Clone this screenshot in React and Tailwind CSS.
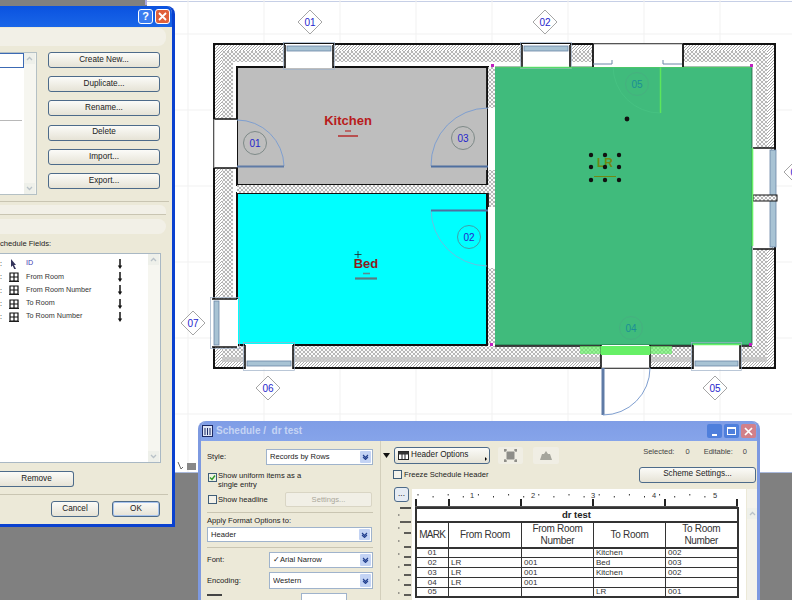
import React from 'react';

const font = "font-['Liberation_Sans',Arial,sans-serif]";

const BTN = 'flex items-center justify-center rounded-[3px] border border-[#4d6b8a] bg-gradient-to-b from-[#fbfbf8] to-[#e6e3d6] text-[8.2px] leading-none text-[#222]';
const hatchLines = [188, 264, 340, 416, 492, 568, 644, 720];
const gridRows = [34, 110, 186, 262, 338, 414];

const Button = ({ className, children }) => <div className={`${BTN} ${className}`}>{children}</div>;

const Select = ({ className, children }) => (
    <div className={`flex items-center border border-[#9fb3cc] bg-white pl-[3px] pr-px text-[7.6px] text-[#222] ${className}`}>
        <span className="flex-1 truncate">{children}</span>
        <span className="flex h-[calc(100%-2px)] w-[11px] items-center justify-center rounded-[1px] bg-[#c3d3f4]">
            <svg width="7" height="6" viewBox="0 0 7 6"><path d="M1 1l2.5 2.5L6 1M1 3l2.5 2.5L6 3" fill="none" stroke="#23408f" strokeWidth="1.1" /></svg>
        </span>
    </div>
);

const Check = ({ on }) => (
    <span className={`flex h-[9px] w-[9px] shrink-0 items-center justify-center border border-[#3f5d78] ${on ? 'bg-[#eef3e4]' : 'bg-[#f4f2ea]'}`}>
        {on && <svg width="7" height="7" viewBox="0 0 7 7"><path d="M1 3.5l2 2L6 1.5" fill="none" stroke="#2f9a26" strokeWidth="1.4" /></svg>}
    </span>
);

const GridIcon = () => (
    <svg width="10" height="10" viewBox="0 0 10 10"><path d="M1 1h8v8H1zM5 1v8M1 5h8" fill="none" stroke="#111" strokeWidth="1.2" /><path d="M0 9.6h10" stroke="#111" /></svg>
);
const CursorIcon = () => (
    <svg width="10" height="10" viewBox="0 0 10 10"><path d="M2 0l5 6H5l2 4-1.6.4L3.6 6.6 2 8z" fill="#33335a" /></svg>
);
const DownArrow = () => (
    <svg width="6" height="10" viewBox="0 0 6 10"><path d="M3 0v8" stroke="#111" strokeWidth="1.5" /><path d="M.8 6.5h4.4L3 10z" fill="#111" /></svg>
);
const ScrollArrow = ({ down }) => (
    <svg width="11" height="11" viewBox="0 0 11 11"><rect width="11" height="11" fill="#eef0ea" /><path d={down ? 'M3 4l2.5 2.5L8 4' : 'M3 7l2.5-2.5L8 7'} fill="none" stroke="#b9c2c8" strokeWidth="1.3" /></svg>
);

const Field = ({ icon, label, blue }) => (
    <div className="flex h-[13.3px] items-center">
        <span className="w-[2px] text-[7px] leading-none text-black">:</span>
        <span className="ml-[7px] flex w-[17px] items-center">{icon}</span>
        <span className={`w-[91px] text-[7.2px] ${blue ? 'text-[#3a3ab0]' : 'text-[#333]'}`}>{label}</span>
        <DownArrow />
    </div>
);

const Diamond = ({ x, y, label }) => (
    <g>
        <path d={`M${x} ${y - 12}L${x + 12} ${y}L${x} ${y + 12}L${x - 12} ${y}Z`} fill="#fff" stroke="#a5a5a5" />
        <text x={x} y={y + 3.5} textAnchor="middle" fontSize="10" fill="#2525cc">{label}</text>
    </g>
);

const Tag = ({ x, y, label, stroke = '#7e8a88', color = '#2525cc' }) => (
    <g>
        <circle cx={x} cy={y} r="11.5" fill="none" stroke={stroke} />
        <text x={x} y={y + 3.5} textAnchor="middle" fontSize="10" fill={color}>{label}</text>
    </g>
);

// window in a wall: gap, black jambs and the glass on the outer side
const PlanWindow = ({ x, y, w, h, side }) => {
    const across = side === 'top' || side === 'bottom';
    const glass = {
        top: [x + 2, y + 2, w - 4, 5],
        bottom: [x + 2, y + h - 8, w - 4, 5],
        left: [x + 2, y + 2, 5, h - 4],
    }[side];
    return (
        <g>
            <rect x={x} y={y} width={w} height={h} fill="#fff" />
            <rect x={glass[0]} y={glass[1]} width={glass[2]} height={glass[3]} fill="#a8c3d4" stroke="#6a86a6" strokeWidth="0.8" />
            {across ? (
                <path d={`M${x} ${y + 1}v${h - 1}M${x + w} ${y + 1}v${h - 1}`} stroke="#111" strokeWidth="1.6" />
            ) : (
                <path d={`M${x} ${y}h${w - 1}M${x} ${y + h}h${w - 1}`} stroke="#111" strokeWidth="1.6" />
            )}
            <rect x={x - 1.5} y={y - 1.5} width={w + 3} height={h + 3} fill="none" stroke="#9db0c6" strokeWidth="0.7" />
        </g>
    );
};

const FloorPlan = () => (
    <svg className="absolute left-0 top-0" width="792" height="473" viewBox="0 0 792 473" fontFamily="'Liberation Sans', Arial, sans-serif">
        <defs>
            <pattern id="diag" width="3" height="3" patternUnits="userSpaceOnUse">
                <rect width="3" height="3" fill="#fff" />
                <path d="M-1 1L1 -1M0 3L3 0M2 4L4 2" stroke="#a0a0a0" strokeWidth="0.9" />
            </pattern>
            <pattern id="cross" width="4" height="4" patternUnits="userSpaceOnUse">
                <rect width="4" height="4" fill="#fafafa" />
                <path d="M0 0L4 4M4 0L0 4" stroke="#a6a6a6" strokeWidth="0.8" />
            </pattern>
        </defs>

        {hatchLines.map((x) => <path key={x} d={`M${x} 0V473`} stroke="#f1f1f1" />)}
        {gridRows.map((y) => <path key={y} d={`M145 ${y}H792`} stroke="#f1f1f1" />)}

        {/* walls */}
        <rect x="214" y="44" width="561" height="324" fill="url(#diag)" stroke="#111" strokeWidth="2" />
        <rect x="222" y="51" width="545" height="309" fill="url(#cross)" />
        <rect x="222" y="357" width="545" height="5" fill="#c4c4c4" opacity="0.8" />
        <rect x="233" y="62" width="523" height="284" fill="#fff" />

        {/* rooms */}
        <rect x="237" y="67" width="251" height="118" fill="#bebebe" stroke="#111" strokeWidth="2" />
        <rect x="237" y="193" width="250" height="152" fill="#00ffff" stroke="#111" strokeWidth="2" />
        <rect x="488" y="67" width="7" height="278" fill="url(#cross)" />
        <rect x="237" y="185" width="251" height="8" fill="url(#cross)" />
        <rect x="495" y="67" width="257" height="278" fill="#40bb7c" />
        <path d="M495 67H752V345H495" fill="none" stroke="#1c5e3a" strokeWidth="0.8" />
        <path d="M487 67V108M487 170V185M488 193V207M487 268V345" stroke="#111" strokeWidth="1.8" />
        <path d="M237 345H488M495 346H601M650 346H693M740 346H752" stroke="#111" strokeWidth="1.6" />

        {/* corner dots */}
        <rect x="491" y="64" width="3" height="3" fill="#c020c0" />
        <rect x="750" y="64" width="3" height="3" fill="#c020c0" />
        <rect x="490" y="343" width="3" height="3" fill="#c020c0" />
        <rect x="749" y="343" width="3" height="3" fill="#c020c0" />

        {/* door gaps */}
        <rect x="214" y="119" width="23" height="49" fill="#fff" />
        <path d="M214 119h23M214 168h23" stroke="#111" strokeWidth="1.6" />
        <path d="M214 119v49" stroke="#9a9a9a" />
        <rect x="488" y="108" width="7" height="62" fill="#fff" />
        <rect x="488" y="207" width="7" height="61" fill="#fff" />
        <rect x="593" y="44" width="90" height="23" fill="#fff" />
        <path d="M593 44h90" stroke="#9a9a9a" />
        <path d="M593 44v23M683 44v23" stroke="#111" strokeWidth="1.8" />
        <path d="M593 64h19v-4M663 60v4h19" fill="none" stroke="#6a86a6" />
        <rect x="601" y="345" width="49" height="23" fill="#fff" />
        <path d="M601 345v23M650 345v23" stroke="#111" strokeWidth="1.6" />
        <path d="M601 368h49" stroke="#8a8a8a" />

        {/* windows */}
        <PlanWindow x={285} y={44} w={48} h={24} side="top" />
        <PlanWindow x={522} y={44} w={48} h={23} side="top" />
        <PlanWindow x={212} y={299} w={26} h={48} side="left" />
        <PlanWindow x={245} y={344} w={48} h={25} side="bottom" />
        <PlanWindow x={693} y={344} w={47} h={25} side="bottom" />
        <rect x="753" y="148" width="18" height="101" fill="#fff" />
        <rect x="770" y="150" width="6" height="47" fill="#a8c3d4" stroke="#6a86a6" strokeWidth="0.8" />
        <rect x="770" y="200" width="6" height="47" fill="#a8c3d4" stroke="#6a86a6" strokeWidth="0.8" />
        <rect x="753" y="195" width="24" height="6" fill="url(#cross)" stroke="#111" />
        <path d="M753 148h23M753 249h23" stroke="#111" strokeWidth="1.6" />

        {/* green highlights */}
        <rect x="580" y="346" width="92" height="8" fill="#66f066" opacity="0.7" />
        <rect x="601" y="346" width="49" height="9" fill="#66f066" />
        <path d="M520 67.5h52M693 344.5h48M752.5 148v98" stroke="#66f066" strokeWidth="1.6" />
        <path d="M660.5 67v46" stroke="#5ce65c" strokeWidth="1.5" />
        <path d="M495 67.5H752" stroke="#52d46a" strokeWidth="0.8" />

        {/* doors */}
        <path d="M237 120A47 47 0 0 1 284 166" fill="none" stroke="#7f9fd0" />
        <path d="M237 166.5h47" stroke="#5f7ba6" strokeWidth="2" />
        <path d="M431 166A57 57 0 0 1 488 108" fill="none" stroke="#7f9fd0" />
        <path d="M431 166.5h57" stroke="#4f6f9f" strokeWidth="2" />
        <path d="M431 210A57 57 0 0 0 487 266" fill="none" stroke="#69c0e0" />
        <path d="M431 210.5h57" stroke="#4f6f9f" strokeWidth="2" />
        <path d="M603 368v47" stroke="#5f7ba6" strokeWidth="3" />
        <path d="M603 415A47 47 0 0 0 650 368" fill="none" stroke="#7f9fd0" />
        <path d="M660 113A47 47 0 0 1 613 67" fill="none" stroke="#46c282" />

        <Tag x={255} y={143} label="01" />
        <Tag x={463} y={138} label="03" />
        <Tag x={469} y={237} label="02" stroke="#3f9fa8" />
        <Tag x={637} y={84} label="05" stroke="#46b080" color="#1b8f96" />
        <Tag x={631} y={328} label="04" stroke="#46b080" color="#1b8f96" />

        <Diamond x={310} y={22} label="01" />
        <Diamond x={545} y={22} label="02" />
        <Diamond x={193} y={323} label="07" />
        <Diamond x={268} y={388} label="06" />
        <Diamond x={715} y={388} label="05" />
        <Diamond x={796} y={172} label="03" />

        {/* room labels */}
        <text x="348" y="125" textAnchor="middle" fontSize="13" fontWeight="700" fill="#b81b1b">Kitchen</text>
        <path d="M345 131h6" stroke="#b85050" strokeWidth="1.6" />
        <path d="M338 136h20" stroke="#b85050" strokeWidth="2" />
        <text x="366" y="268" textAnchor="middle" fontSize="13" fontWeight="700" fill="#8a1c1c">Bed</text>
        <path d="M358 251v7M354.5 254.5h7" stroke="#222" strokeWidth="0.8" />
        <path d="M363 273.5h7" stroke="#5a8a90" strokeWidth="1.6" />
        <path d="M355 278.5h22" stroke="#5a7a80" strokeWidth="2.2" />
        <text x="605" y="167" textAnchor="middle" fontSize="12" fontWeight="700" fill="#6f8a14">LR</text>
        <path d="M594 176.5h22" stroke="#6f8a14" strokeWidth="1" />
        {[591, 605, 619].map((x) => [155, 167, 180].map((y) => <circle key={`${x}-${y}`} cx={x} cy={y} r="2.2" fill="#111" />))}
        <circle cx="627" cy="119" r="2.4" fill="#111" />

        {/* corner tool icons of the canvas */}
        <path d="M178 462l3 7 2-2" fill="none" stroke="#666" />
        <rect x="187" y="463" width="9" height="7" fill="#888" />
        <path d="M175 472.5H198M760 472.5H792" stroke="#a9b9dc" />
    </svg>
);

const PlanDialog = () => (
    <div className={`absolute left-0 top-[6px] flex h-[521px] w-[175px] flex-col overflow-hidden rounded-tr-lg border-r-[3px] border-b-[3px] border-[#0a41cf] bg-[#ece9d8] ${font}`}>
        <div className="flex h-[21px] shrink-0 items-center justify-end gap-[2px] bg-gradient-to-b from-[#0a52e0] to-[#1a66e8] pr-[2px]">
            <span className="flex h-[15px] w-[15px] items-center justify-center rounded-[3px] border border-white bg-[#3a7cf0] text-[11px] font-bold leading-none text-white">?</span>
            <span className="flex h-[15px] w-[15px] items-center justify-center rounded-[3px] border border-white bg-[#e0603a]">
                <svg width="9" height="9" viewBox="0 0 9 9"><path d="M1 1l7 7M8 1L1 8" stroke="#fff" strokeWidth="1.8" /></svg>
            </span>
        </div>
        <div className="mt-px h-[18px] w-[166px] shrink-0 rounded-r-lg bg-[#f2f0e7]" />
        <div className="mt-[6px] flex shrink-0">
            <div className="flex h-[143px] w-[37px] border border-l-0 border-[#b4c0c4] bg-white">
                <div className="flex-1">
                    <div className="h-[15px] border border-l-0 border-[#3c6ab4]" />
                    <div className="mt-[52px] mr-[2px] border-t border-[#b8b8b8]" />
                </div>
                <div className="flex w-[12px] flex-col justify-between bg-[#f6f6f0]">
                    <ScrollArrow />
                    <ScrollArrow down />
                </div>
            </div>
            <div className="ml-[11px] flex w-[112px] flex-col gap-[8.2px]">
                {['Create New...', 'Duplicate...', 'Rename...', 'Delete', 'Import...', 'Export...'].map((t) => (
                    <Button key={t} className="h-4">{t}</Button>
                ))}
            </div>
        </div>
        <div className="mt-[6px] h-px w-[169px] shrink-0 bg-[#c9c5b2]" />
        <div className="mt-[3px] h-[10px] w-[166px] shrink-0 rounded-tr-md border-b border-[#c9c5b2] bg-[#f2f0e7]" />
        <div className="mt-[4px] h-[15px] w-[166px] shrink-0 rounded-r-lg bg-[#f2f0e7]" />
        <div className="mt-[5px] h-[10px] shrink-0 text-[7.6px] leading-[10px] text-[#222]">chedule Fields:</div>
        <div className="mt-[4px] flex h-[210px] w-[161px] shrink-0 border border-l-0 border-[#a9b8c4] bg-white">
            <div className="flex-1 pt-[3px]">
                <Field icon={<CursorIcon />} label="ID" blue />
                <Field icon={<GridIcon />} label="From Room" />
                <Field icon={<GridIcon />} label="From Room Number" />
                <Field icon={<GridIcon />} label="To Room" />
                <Field icon={<GridIcon />} label="To Room Number" />
            </div>
            <div className="flex w-[12px] flex-col justify-between bg-[#f6f6f0]">
                <ScrollArrow />
                <ScrollArrow down />
            </div>
        </div>
        <Button className="mt-2 h-4 w-[74px] shrink-0 rounded-l-none border-l-0">Remove</Button>
        <div className="mt-[7px] h-px w-[168px] shrink-0 bg-[#c9c5b2]" />
        <div className="mt-[6px] flex shrink-0 pl-[51px]">
            <Button className="h-4 w-12">Cancel</Button>
            <Button className="ml-[13px] h-4 w-12 border-[#3a5f9a] shadow-[inset_0_0_0_1px_#a8c4ee]">OK</Button>
        </div>
    </div>
);

const Ruler = () => (
    <svg className="block" width="334" height="18" viewBox="0 0 334 18" fontFamily="'Liberation Sans', Arial, sans-serif">
        {[0, 1, 2, 3, 4, 5, 6, 7, 8, 9, 10, 11, 12, 13, 14, 15, 16, 17, 18, 19].map((i) => (
            <path key={i} d={`M${6 + i * 15.1} ${i % 2 ? 7 : 5}v1.5`} stroke="#333" />
        ))}
        {[[60, '1'], [121, '2'], [181, '3'], [242, '4'], [303, '5']].map(([x, t]) => (
            <text key={t} x={x} y="9" textAnchor="middle" fontSize="7.5" fill="#333">{t}</text>
        ))}
        {[4, 37, 109, 181, 253, 325].map((x) => <path key={x} d={`M${x} 10v7`} stroke="#222" strokeWidth="2" />)}
        <path d="M3 17.5H326" stroke="#555" />
    </svg>
);

const SideRuler = () => (
    <svg className="absolute left-0 top-[16px]" width="18" height="100" viewBox="0 0 18 100">
        {[3, 17, 28, 42, 52, 60, 70, 80, 90].map((y) => <path key={y} d={`M${y % 14 === 3 ? 6 : 10} ${y}H17`} stroke="#222" strokeWidth="1.4" />)}
        {[10, 23, 36, 49, 62, 75, 88].map((y) => <path key={y} d={`M4 ${y}h1.5`} stroke="#444" />)}
    </svg>
);

const rows = [
    { cells: ['01', '', '', 'Kitchen', '002'], h: 'h-[9px]' },
    { cells: ['02', 'LR', '001', 'Bed', '003'], h: 'h-[10px]' },
    { cells: ['03', 'LR', '001', 'Kitchen', '002'], h: 'h-[10px]' },
    { cells: ['04', 'LR', '001', '', ''], h: 'h-[10px]' },
    { cells: ['05', '', '', 'LR', '001'], h: 'h-[9px]' },
];

const ScheduleTable = () => (
    <table className="ml-[2.5px] w-[322px] table-fixed border-collapse border-2 border-[#333] bg-white text-[#333]">
        <colgroup>
            <col className="w-[33px]" />
            <col className="w-[73px]" />
            <col className="w-[72px]" />
            <col className="w-[72px]" />
            <col className="w-[72px]" />
        </colgroup>
        <tbody>
            <tr className="h-[14px] border-b-2 border-[#333]">
                <td colSpan={5} className="p-0 text-center text-[9.5px] font-bold leading-none text-[#222]">dr test</td>
            </tr>
            <tr className="h-[24px] border-b-2 border-[#333] text-center text-[10px] leading-[12px] tracking-[-0.3px]">
                <td className="p-0 tracking-[-0.7px]">MARK</td>
                {['From Room', 'From Room Number', 'To Room', 'To Room Number'].map((t) => (
                    <td key={t} className="border-l border-[#333] p-0 px-2">{t}</td>
                ))}
            </tr>
            {rows.map((r) => (
                <tr key={r.cells[0]} className={`${r.h} border-b border-[#333] text-[8px] leading-[8px]`}>
                    <td className="p-0 text-center">{r.cells[0]}</td>
                    {r.cells.slice(1).map((c, i) => (
                        <td key={i} className="border-l border-[#333] p-0 pl-[2px]">{c}</td>
                    ))}
                </tr>
            ))}
        </tbody>
    </table>
);

const ScheduleWindow = () => (
    <div className={`absolute left-[198px] top-[421px] flex h-[190px] w-[562px] flex-col overflow-hidden rounded-t-lg border-x-[3px] border-[#7d99e0] bg-[#ece9d8] ${font}`}>
        <div className="flex h-[20px] shrink-0 items-center bg-gradient-to-b from-[#7f9de6] to-[#86a4ea] pl-px pr-px">
            <svg width="11" height="12" viewBox="0 0 11 12"><rect x=".5" y=".5" width="10" height="11" fill="#dfe6f6" stroke="#1c2a66" /><path d="M3 3v7M5.5 3v7M8 3v7" stroke="#1c2a66" /></svg>
            <span className="ml-[3px] flex-1 whitespace-pre text-[10px] font-bold leading-none text-[#c5d4f4]">Schedule /  dr test</span>
            <div className="flex gap-[2px]">
                <span className="flex h-[14px] w-[15px] items-end justify-center rounded-[2px] bg-[#4f7fdc] pb-[2px]"><span className="h-[2px] w-[5px] bg-white" /></span>
                <span className="flex h-[14px] w-[15px] items-center justify-center rounded-[2px] bg-[#4f7fdc]"><span className="h-[8px] w-[9px] border border-t-2 border-white" /></span>
                <span className="flex h-[14px] w-[15px] items-center justify-center rounded-[2px] bg-[#d2808a]">
                    <svg width="9" height="9" viewBox="0 0 9 9"><path d="M1 1l7 7M8 1L1 8" stroke="#fff" strokeWidth="1.7" /></svg>
                </span>
            </div>
        </div>
        <div className="flex flex-1">
            <div className="w-[180px] shrink-0 border-r border-[#d3cfbc] pl-[6px] pr-[7px] pt-2 text-[7.6px] text-[#222]">
                <div className="flex h-4 items-center">
                    <span className="w-[59px]">Style:</span>
                    <Select className="h-4 w-[107px]">Records by Rows</Select>
                </div>
                <div className="mt-[6px] flex items-start">
                    <span className="ml-px mt-[2px]"><Check on /></span>
                    <span className="ml-px w-[95px] leading-[9px]">Show uniform items as a single entry</span>
                </div>
                <div className="mt-[3px] flex h-[15px] items-center">
                    <span className="ml-px"><Check /></span>
                    <span className="ml-px w-[67px]">Show headline</span>
                    <div className="flex h-[15px] w-[87px] items-center justify-center rounded-[2px] border border-[#d9d5c4] bg-[#f1efe6] text-[#aaa79a]">Settings...</div>
                </div>
                <div className="mt-[5px] h-px bg-[#c9c5b2]" />
                <div className="mt-[3px] h-[11px] leading-[10px]">Apply Format Options to:</div>
                <Select className="h-[15px] w-[165px]">Header</Select>
                <div className="mt-[5px] h-px bg-[#c9c5b2]" />
                <div className="mt-[4px] flex h-4 items-center">
                    <span className="w-[62px]">Font:</span>
                    <Select className="h-4 w-[104px]">✓Arial Narrow</Select>
                </div>
                <div className="mt-[4px] flex h-[17px] items-center">
                    <span className="w-[62px]">Encoding:</span>
                    <Select className="h-[17px] w-[104px]">Western</Select>
                </div>
                <div className="mt-[4px] flex items-start">
                    <span className="mt-px h-[5px] w-[15px] border-t-2 border-[#444]" />
                    <span className="ml-[79px] h-[12px] w-[46px] border border-[#9fb3cc] bg-white" />
                </div>
            </div>
            <div className="flex-1 pt-[6px]">
                <div className="flex h-[17px] items-center pr-[10px]">
                    <svg className="ml-[2px]" width="7" height="5" viewBox="0 0 7 5"><path d="M0 0h7L3.5 5z" fill="#111" /></svg>
                    <Button className="ml-[4px] h-[17px] w-[96px] justify-start rounded-[3px] border-[#3e5f82] pl-[3px] text-[7.8px]">
                        <svg width="11" height="9" viewBox="0 0 11 9"><rect x=".5" y=".5" width="10" height="8" fill="#fff" stroke="#222" /><rect x=".5" y=".5" width="10" height="3" fill="#333" /><path d="M4 3v5M7 3v5" stroke="#222" /></svg>
                        <span className="ml-[2px] flex-1 text-left">Header Options</span>
                        <span className="mr-[2px] mt-[6px] h-0 w-0 border-y-[2px] border-l-[2px] border-y-transparent border-l-black" />
                    </Button>
                    <div className="ml-2 flex h-[17px] w-[25px] items-center justify-center rounded-[2px] bg-[#f0eee4]">
                        <svg width="13" height="13" viewBox="0 0 13 13"><rect x="2.5" y="2.5" width="8" height="8" fill="#8d8d88" /><path d="M0 1h3M10 1h3M0 12h3M10 12h3M1 0v3M12 0v3M1 10v3M12 10v3" stroke="#6f6f6a" /></svg>
                    </div>
                    <div className="ml-[10px] flex h-[17px] w-[26px] items-center justify-center rounded-[2px] bg-[#f0eee4]">
                        <svg width="12" height="9" viewBox="0 0 12 9"><path d="M6 0l2 3h2l2 6H0l2-6h2z" fill="#a5a59c" /></svg>
                    </div>
                    <div className="mb-[7px] ml-auto flex text-[7.5px] leading-none text-[#444]">
                        <span>Selected:</span>
                        <span className="ml-[11px]">0</span>
                        <span className="ml-[14px]">Editable:</span>
                        <span className="ml-[10px]">0</span>
                    </div>
                </div>
                <div className="mt-[3px] flex h-[15px] items-center pr-px">
                    <span className="ml-[12px]"><Check /></span>
                    <span className="ml-[2px] text-[7.6px] text-[#222]">Freeze Schedule Header</span>
                    <Button className="ml-auto h-[16px] w-[117px] border-[#3e5f82]">Scheme Settings...</Button>
                </div>
                <div className="relative mt-[7px] flex">
                    <div className="relative h-[120px] w-[31px] shrink-0">
                        <Button className="absolute left-[13px] top-[-2px] h-[15px] w-[15px] border-[#3e5f82] bg-none bg-[#e6ecf4]">...</Button>
                        <div className="absolute left-[13px] top-0 h-full">
                            <SideRuler />
                        </div>
                    </div>
                    <div className="w-[334px] bg-white">
                        <Ruler />
                        <ScheduleTable />
                    </div>
                    <div className="ml-px w-[10px] bg-[#f4f3ec]">
                        <div className="mt-[19px]"><ScrollArrow /></div>
                    </div>
                </div>
            </div>
        </div>
    </div>
);

const App = () => (
    <div className="relative h-[600px] w-[792px] overflow-hidden bg-[#808080]">
        <div className="absolute left-[145px] top-0 h-[5px] w-[2px] bg-[#a8a8e0]" />
        <div className="absolute left-[147px] right-0 top-0 h-[473px] bg-white">
            <div className="mt-px h-px bg-[#c6cfe6]" />
        </div>
        <FloorPlan />
        <PlanDialog />
        <ScheduleWindow />
    </div>
);

export default App;
